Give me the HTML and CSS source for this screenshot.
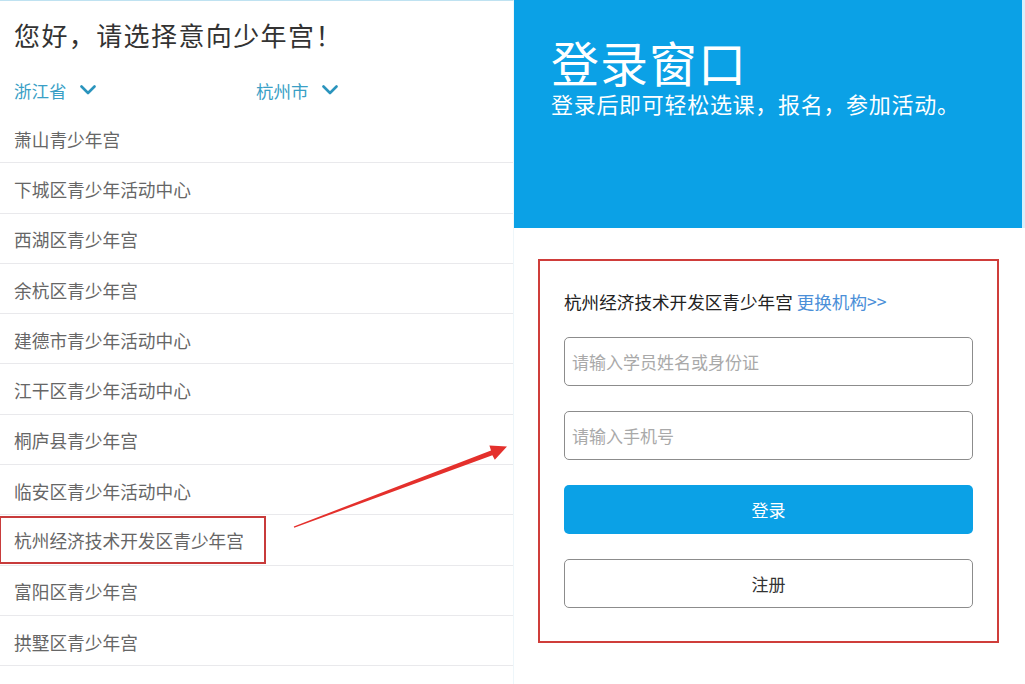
FILE: index.html
```html
<!DOCTYPE html>
<html lang="zh-CN">
<head>
<meta charset="utf-8">
<title>选择少年宫</title>
<link rel="stylesheet" href="styles.css">
</head>
<body>
<div class="page">
  <section class="picker">
    <h1 class="picker-title">您好，请选择意向少年宫！</h1>
    <div class="filters">
      <div class="filter filter-province">浙江省
        <svg class="chev" viewBox="0 0 16 10" width="16" height="10"><path d="M1.5 1.5 L8 8 L14.5 1.5" fill="none" stroke="currentColor" stroke-width="2.6" stroke-linecap="round" stroke-linejoin="round"/></svg>
      </div>
      <div class="filter filter-city">杭州市
        <svg class="chev" viewBox="0 0 16 10" width="16" height="10"><path d="M1.5 1.5 L8 8 L14.5 1.5" fill="none" stroke="currentColor" stroke-width="2.6" stroke-linecap="round" stroke-linejoin="round"/></svg>
      </div>
    </div>
    <ul class="palace-list">
      <li class="palace"><span class="palace-name">萧山青少年宫</span></li>
      <li class="palace"><span class="palace-name">下城区青少年活动中心</span></li>
      <li class="palace"><span class="palace-name">西湖区青少年宫</span></li>
      <li class="palace"><span class="palace-name">余杭区青少年宫</span></li>
      <li class="palace"><span class="palace-name">建德市青少年活动中心</span></li>
      <li class="palace"><span class="palace-name">江干区青少年活动中心</span></li>
      <li class="palace"><span class="palace-name">桐庐县青少年宫</span></li>
      <li class="palace"><span class="palace-name">临安区青少年活动中心</span></li>
      <li class="palace"><span class="palace-name palace-name--marked">杭州经济技术开发区青少年宫</span></li>
      <li class="palace"><span class="palace-name">富阳区青少年宫</span></li>
      <li class="palace"><span class="palace-name">拱墅区青少年宫</span></li>
      <li class="palace"><span class="palace-name">滨江区青少年活动中心</span></li>
    </ul>
  </section>

  <section class="login">
    <header class="login-hero">
      <h2 class="login-title">登录窗口</h2>
      <p class="login-sub">登录后即可轻松选课，报名，参加活动。</p>
    </header>
    <div class="login-body">
      <form class="login-card">
        <div class="org-line">杭州经济技术开发区青少年宫 <a class="org-switch" href="#">更换机构&gt;&gt;</a></div>
        <div class="field"><span class="placeholder">请输入学员姓名或身份证</span></div>
        <div class="field"><span class="placeholder">请输入手机号</span></div>
        <div class="btn btn-primary">登录</div>
        <div class="btn btn-outline">注册</div>
      </form>
    </div>
  </section>

  <svg class="pointer-arrow" width="1025" height="684" viewBox="0 0 1025 684">
    <polygon points="294.2,527.8 492.4,455.2 494.8,459.8 507,446.5 489.4,445.6 491.0,450.5 293.8,526.4" fill="#e4302c"/>
  </svg>
</div>
</body>
</html>
```

FILE: styles.css
```css
* { box-sizing: border-box; margin: 0; padding: 0; }

html, body {
  width: 1025px;
  height: 684px;
  overflow: hidden;
  background: #ffffff;
}

body {
  font-family: "Noto Sans CJK SC", "Noto Sans", "Liberation Sans", sans-serif;
  color: #333;
}

.page {
  position: relative;
  display: flex;
  width: 1025px;
  height: 684px;
}

/* ---------- left: picker ---------- */
.picker {
  width: 514px;
  flex: 0 0 514px;
  background: #fff;
  border-top: 1px solid #bfe2f1;
  border-right: 1px solid #eef6fa;
}

.picker-title {
  height: 66px;
  display: flex;
  align-items: center;
  padding-left: 14px;
  font-size: 26px;
  font-weight: 400;
  color: #333;
  letter-spacing: 1.4px;
}

.filters {
  height: 46px;
  display: flex;
  align-items: center;
  padding-left: 14px;
}

.filter {
  display: flex;
  align-items: center;
  font-size: 17.5px;
  color: #3a9fc6;
}

.filter-province { width: 242px; }

.chev {
  margin-left: 13px;
  color: #2a94bd;
}

.palace-list { list-style: none; }

.palace {
  height: 50.3px;
  border-bottom: 1px solid #e9e9ec;
  display: flex;
  align-items: center;
  padding-top: 2px;
}

.palace-name {
  display: flex;
  align-items: center;
  height: 48px;
  padding-left: 14px;
  font-size: 17.7px;
  color: #666;
}

.palace-name--marked {
  width: 266px;
  border: 2px solid #c83b3b;
  border-left-width: 1px;
  padding-left: 13px;
  margin-top: -2px;
}

/* ---------- right: login ---------- */
.login {
  flex: 1;
  display: flex;
  flex-direction: column;
}

.login-hero {
  height: 228px;
  background: #0ba1e6;
  padding: 36px 0 0 37px;
  color: #fff;
  border-right: 3px solid #d9f0fb;
}

.login-title {
  font-size: 48px;
  font-weight: 400;
  line-height: 50px;
  letter-spacing: 1px;
}

.login-sub {
  margin-top: 4px;
  font-size: 22px;
  line-height: 26px;
  letter-spacing: 0.7px;
}

.login-body {
  padding: 31px 26px 0 24px;
}

.login-card {
  height: 384px;
  border: 2px solid #cf3d3a;
  padding: 29px 24px 0 24px;
  display: flex;
  flex-direction: column;
  gap: 25px;
}

.org-line {
  height: 24px;
  line-height: 24px;
  font-size: 17.6px;
  color: #222;
  margin-bottom: -2px;
}

.org-switch {
  color: #4b8fd8;
  text-decoration: none;
}

.field {
  height: 49px;
  border: 1.5px solid #8c8c8c;
  border-radius: 5px;
  display: flex;
  align-items: center;
  padding-left: 7px;
}

.placeholder {
  font-size: 17px;
  color: #a9a9a9;
}

.btn {
  height: 49px;
  border-radius: 5px;
  display: flex;
  align-items: center;
  justify-content: center;
  font-size: 17px;
}

.btn-primary {
  background: #0ba1e6;
  color: #fff;
}

.btn-outline {
  background: #fff;
  border: 1.5px solid #8c8c8c;
  color: #333;
}

/* overlay arrow */
.pointer-arrow {
  position: absolute;
  left: 0;
  top: 0;
  pointer-events: none;
}
```
